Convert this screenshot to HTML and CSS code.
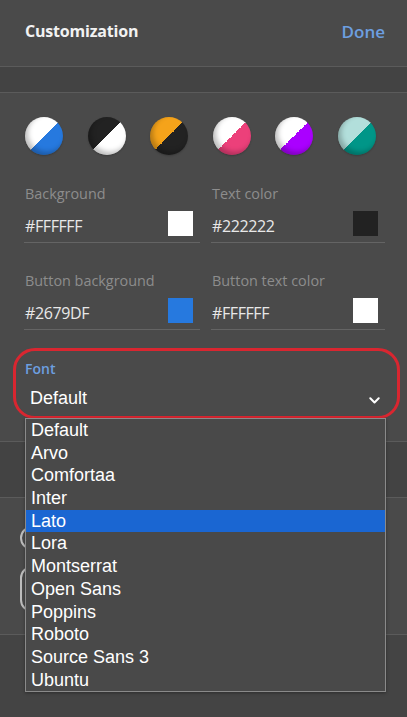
FILE: index.html
```html
<!DOCTYPE html>
<html>
<head>
<meta charset="utf-8">
<link rel="stylesheet" href="styles.css">
</head>
<body>
<div class="page">
  <header class="header">
    <h1 class="title">Customization</h1>
    <span class="done">Done</span>
  </header>
  <div class="band"></div>

  <div class="presets">
    <span class="preset p1"></span>
    <span class="preset p2"></span>
    <span class="preset p3"></span>
    <span class="preset p4"></span>
    <span class="preset p5"></span>
    <span class="preset p6"></span>
  </div>

  <div class="fields">
    <div class="field">
      <div class="label">Background</div>
      <div class="value-row"><span class="value">#FFFFFF</span><span class="swatch sw-white"></span></div>
    </div>
    <div class="field">
      <div class="label">Text color</div>
      <div class="value-row"><span class="value">#222222</span><span class="swatch sw-dark"></span></div>
    </div>
    <div class="field">
      <div class="label">Button background</div>
      <div class="value-row"><span class="value">#2679DF</span><span class="swatch sw-blue"></span></div>
    </div>
    <div class="field">
      <div class="label">Button text color</div>
      <div class="value-row"><span class="value">#FFFFFF</span><span class="swatch sw-white"></span></div>
    </div>
  </div>

  <div class="font-section">
    <div class="font-label">Font</div>
    <div class="select">
      <span class="select-value">Default</span>
      <svg class="chevron" width="11" height="7" viewBox="0 0 11 7"><path d="M1.3 1.3 L5.5 5.5 L9.7 1.3" fill="none" stroke="#fff" stroke-width="2" stroke-linecap="round" stroke-linejoin="round"/></svg>
    </div>
  </div>

  <div class="spacer"></div>
  <div class="band band2"></div>

  <div class="buttons">
    <div class="btn-outline small"></div>
    <div class="btn-outline big"></div>
  </div>
  <div class="footer"></div>

  <ul class="dropdown">
    <li>Default</li>
    <li>Arvo</li>
    <li>Comfortaa</li>
    <li>Inter</li>
    <li class="active">Lato</li>
    <li>Lora</li>
    <li>Montserrat</li>
    <li>Open Sans</li>
    <li>Poppins</li>
    <li>Roboto</li>
    <li>Source Sans 3</li>
    <li>Ubuntu</li>
  </ul>
</div>
</body>
</html>
```

FILE: styles.css
```css
* { box-sizing: border-box; }
html, body {
  margin: 0;
  padding: 0;
  background: #4a4a4a;
}
body {
  width: 407px;
  height: 717px;
  overflow: hidden;
  font-family: "Open Sans", "Noto Sans", sans-serif;
  color: #e8e8e8;
}
.page {
  position: relative;
  width: 407px;
  height: 717px;
  display: flex;
  flex-direction: column;
}
.header {
  height: 67px;
  flex: none;
  display: flex;
  justify-content: space-between;
  align-items: center;
  padding: 0 22px 4px 25px;
  border-bottom: 1px solid #5b5b5b;
}
.title {
  margin: 0;
  font-size: 16px;
  font-weight: 700;
  color: #f2f2f2;
  letter-spacing: -0.2px;
}
.done {
  font-size: 17px;
  font-weight: 600;
  color: #6d9fe0;
}
.band {
  height: 26px;
  flex: none;
  background: #434343;
  border-bottom: 1px solid #5b5b5b;
}
.presets {
  display: flex;
  justify-content: space-between;
  padding: 24px 31px 0 25px;
}
.preset {
  width: 38px;
  height: 38px;
  border-radius: 50%;
  box-shadow: inset 3px -3px 5px rgba(0,0,0,0.25), 0 1px 2px rgba(0,0,0,0.2);
}
.p1 { background: linear-gradient(to bottom right, #ffffff 50%, #2679df 50%); }
.p2 { background: linear-gradient(to bottom right, #222222 50%, #ffffff 50%); }
.p3 { background: linear-gradient(to bottom right, #f5a31a 50%, #222222 50%); }
.p4 { background: linear-gradient(to bottom right, #ffffff 50%, #ec407a 50%); }
.p5 { background: linear-gradient(to bottom right, #ffffff 50%, #aa00ff 50%); }
.p6 { background: linear-gradient(to bottom right, #b2dfdb 50%, #009688 50%); }

.fields {
  display: grid;
  grid-template-columns: 176px 174px;
  column-gap: 11px;
  row-gap: 28px;
  padding: 29px 0 0 24px;
}
.label {
  font-size: 14.4px;
  color: #8d8d8d;
  line-height: 20px;
  padding-left: 1px;
}
.value-row {
  display: flex;
  justify-content: space-between;
  align-items: center;
  height: 39px;
  padding: 6px 7px 0 1px;
  border-bottom: 1px solid #646464;
}
.value {
  font-size: 16px;
  color: #e8e8e8;
  letter-spacing: -0.4px;
}
.swatch {
  width: 25px;
  height: 25px;
  margin-top: -6px;
}
.sw-white { background: #ffffff; }
.sw-dark { background: #222222; }
.sw-blue { background: #2679df; }

.font-section {
  flex: none;
  margin: 18px 7px 0 13px;
  height: 71px;
  border: 3px solid #d92630;
  border-radius: 22px;
  padding: 8px 12px 0 9px;
}
.font-label {
  font-size: 14px;
  font-weight: 600;
  color: #6d9fe0;
  line-height: 20px;
}
.select {
  display: flex;
  justify-content: space-between;
  align-items: center;
  padding: 9px 5px 0 5px;
}
.select-value {
  font-family: "Liberation Sans", Arial, sans-serif;
  font-size: 18px;
  color: #fff;
}
.chevron { margin-top: 3px; }
.spacer { height: 22px; flex: none; }
.band2 { height: 57px; border-top: 1px solid #5b5b5b; }
.buttons {
  flex: none;
  height: 137px;
  border-bottom: 1px solid #5b5b5b;
  padding: 28px 0 0 20px;
  display: flex;
  flex-direction: column;
  gap: 16px;
}
.btn-outline {
  width: 360px;
  border: 2px solid #bdbdbd;
  border-radius: 12px;
}
.btn-outline.small { height: 24px; }
.btn-outline.big { height: 46px; }
.footer {
  flex: 1;
  background: #444444;
}

.dropdown {
  position: absolute;
  left: 25px;
  top: 418px;
  width: 361px;
  margin: 0;
  padding: 0;
  list-style: none;
  background: #494949;
  border: 1px solid #8a8a8a;
  box-shadow: 0 1px 3px rgba(0,0,0,0.35);
  font-family: "Liberation Sans", Arial, sans-serif;
  font-size: 18px;
  color: #fff;
}
.dropdown li {
  height: 22.7px;
  line-height: 22.7px;
  padding-left: 5px;
}
.dropdown li.active { background: #1a66d2; }
```
